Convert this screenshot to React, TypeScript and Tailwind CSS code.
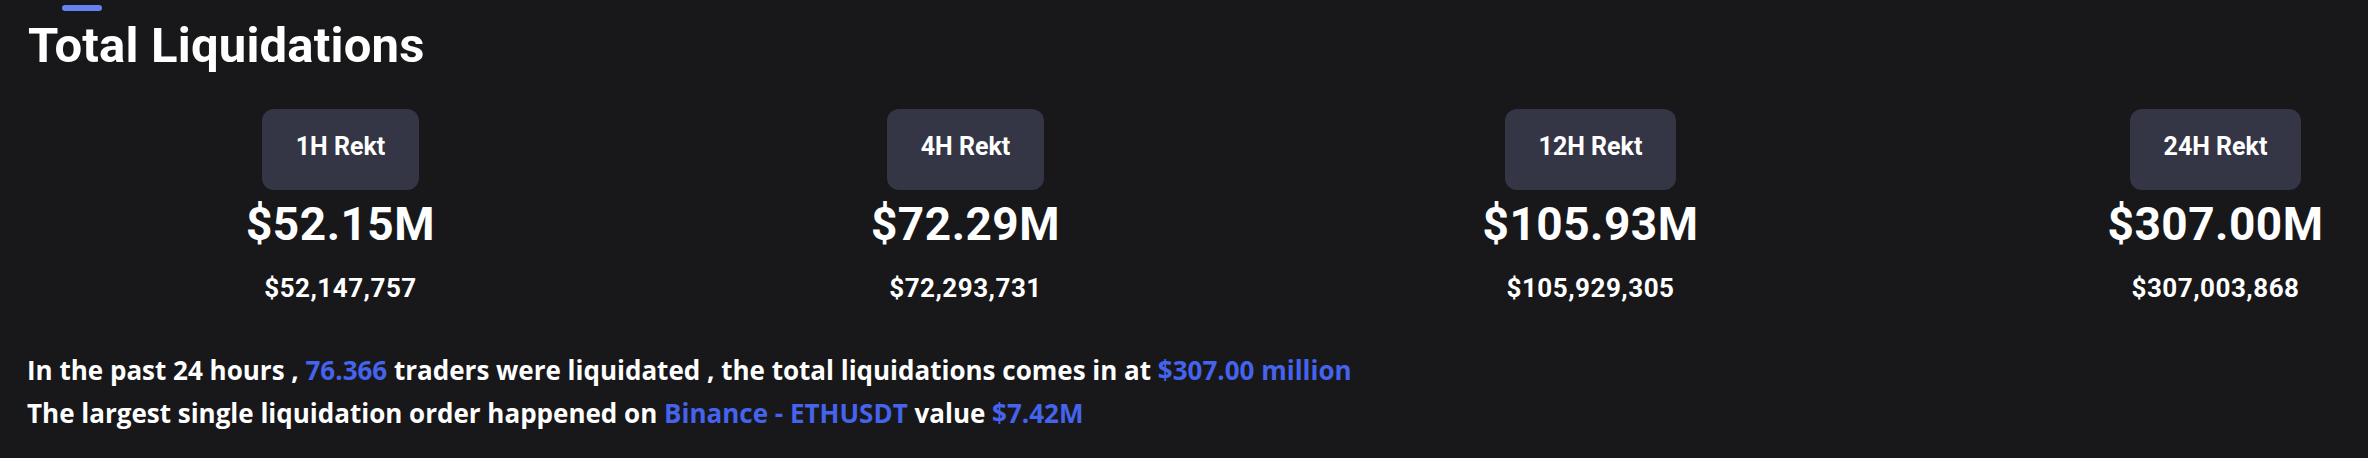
import React from 'react';

interface RektItem {
  label: string;
  short: string;
  full: string;
}

const items: RektItem[] = [
  { label: '1H Rekt', short: '$52.15M', full: '$52,147,757' },
  { label: '4H Rekt', short: '$72.29M', full: '$72,293,731' },
  { label: '12H Rekt', short: '$105.93M', full: '$105,929,305' },
  { label: '24H Rekt', short: '$307.00M', full: '$307,003,868' },
];

const RektCard: React.FC<{ item: RektItem }> = ({ item }) => (
  <div className="w-[625px] shrink-0 flex flex-col items-center">
    <div className="h-[81px] px-[34px] pb-[6px] flex items-center rounded-[12px] bg-[#343545] text-[25px] font-bold leading-none">
      {item.label}
    </div>
    <div className="mt-[11px] text-[46px] font-bold leading-[46px] tracking-[0.5px]">{item.short}</div>
    <div className="mt-[28px] text-[26px] font-bold leading-[26px] tracking-[0.5px]">{item.full}</div>
  </div>
);

export default function App() {
  return (
    <div className="h-[458px] w-full overflow-hidden bg-[#18181b] text-white font-['Roboto',sans-serif]">
      {/* tab indicator */}
      <div className="pl-[62px] pt-[5px]">
        <div className="h-[6px] w-[40px] rounded-full bg-[#6482f0]"></div>
      </div>

      <h2 className="mt-[11px] pl-[28px] text-[49px] font-bold leading-[48px] tracking-[0.2px]">Total Liquidations</h2>

      {/* rekt stats */}
      <div className="mt-[39px] pl-[28px] flex">
        {items.map((it) => (
          <RektCard key={it.label} item={it} />
        ))}
      </div>

      {/* summary */}
      <div className="mt-[48px] pl-[27px] font-['Open_Sans',sans-serif] text-[26px] font-bold leading-[43px]">
        <p>
          In the past 24 hours , <span className="text-[#4563ec]">76.366</span> traders were liquidated , the total
          liquidations comes in at <span className="text-[#4563ec]">$307.00 million</span>
        </p>
        <p>
          The largest single liquidation order happened on{' '}
          <span className="text-[#4563ec]">Binance - ETHUSDT</span> value{' '}
          <span className="text-[#4563ec]">$7.42M</span>
        </p>
      </div>
    </div>
  );
}
